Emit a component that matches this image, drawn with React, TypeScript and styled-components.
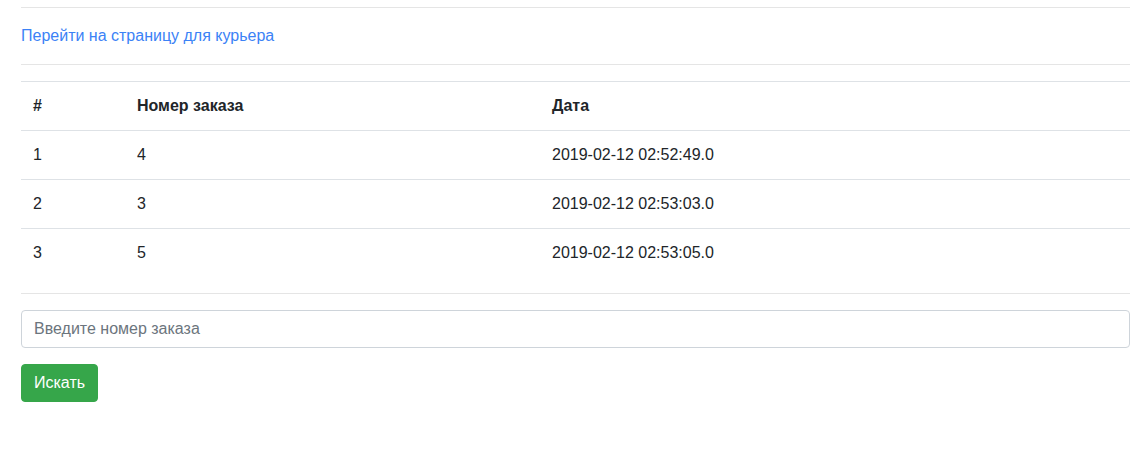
import styled, { createGlobalStyle } from "styled-components";

const GlobalStyle = createGlobalStyle`
  body {
    margin: 0;
    font-family: "Liberation Sans", Arial, sans-serif;
    font-size: 16px;
    line-height: 1.5;
    color: #212529;
    background: #fff;
  }
`;

const Page = styled.div`
  padding: 7px 0 0 21px;
  width: 1109px;
`;

const Rule = styled.hr`
  margin: 0 0 16px;
  border: 0;
  border-top: 1px solid rgba(0, 0, 0, 0.1);
`;

const Para = styled.p`
  margin: 0 0 16px;
`;

const Link = styled.a`
  color: #3b82f6;
  text-decoration: none;
`;

const Table = styled.table`
  width: 100%;
  margin-bottom: 16px;
  border-collapse: collapse;
  color: #212529;
`;

const Th = styled.th<{ $w?: number }>`
  box-sizing: border-box;
  width: ${({ $w }) => ($w ? `${$w}px` : "auto")};
  padding: 12px;
  text-align: left;
  font-weight: 700;
  vertical-align: bottom;
  border-top: 1px solid #dee2e6;
  border-bottom: 1px solid #dee2e6;
`;

const Td = styled.td`
  padding: 12px;
  vertical-align: top;
  border-top: 1px solid #dee2e6;
`;

const Input = styled.input`
  display: block;
  width: 100%;
  box-sizing: border-box;
  height: 38px;
  padding: 6px 12px;
  font-family: inherit;
  font-size: 16px;
  line-height: 1.5;
  color: #495057;
  background: #fff;
  border: 1px solid #ced4da;
  border-radius: 4px;
  margin-bottom: 16px;
  &::placeholder {
    color: #6c757d;
    opacity: 1;
  }
`;

const Button = styled.button`
  display: inline-block;
  padding: 6px 12px;
  font-family: inherit;
  font-size: 16px;
  line-height: 1.5;
  color: #fff;
  background: #36a64a;
  border: 1px solid #36a64a;
  border-radius: 4px;
`;

const orders = [
  { n: 1, id: 4, date: "2019-02-12 02:52:49.0" },
  { n: 2, id: 3, date: "2019-02-12 02:53:03.0" },
  { n: 3, id: 5, date: "2019-02-12 02:53:05.0" },
];

export default function App() {
  return (
    <>
      <GlobalStyle />
      <Page>
        <Rule />
        <Para>
          <Link href="#">Перейти на страницу для курьера</Link>
        </Para>
        <Rule />
        <Table>
          <thead>
            <tr>
              <Th $w={104}>#</Th>
              <Th $w={415}>Номер заказа</Th>
              <Th>Дата</Th>
            </tr>
          </thead>
          <tbody>
            {orders.map((o) => (
              <tr key={o.n}>
                <Td>{o.n}</Td>
                <Td>{o.id}</Td>
                <Td>{o.date}</Td>
              </tr>
            ))}
          </tbody>
        </Table>
        <Rule />
        <Input placeholder="Введите номер заказа" />
        <Button>Искать</Button>
      </Page>
    </>
  );
}
